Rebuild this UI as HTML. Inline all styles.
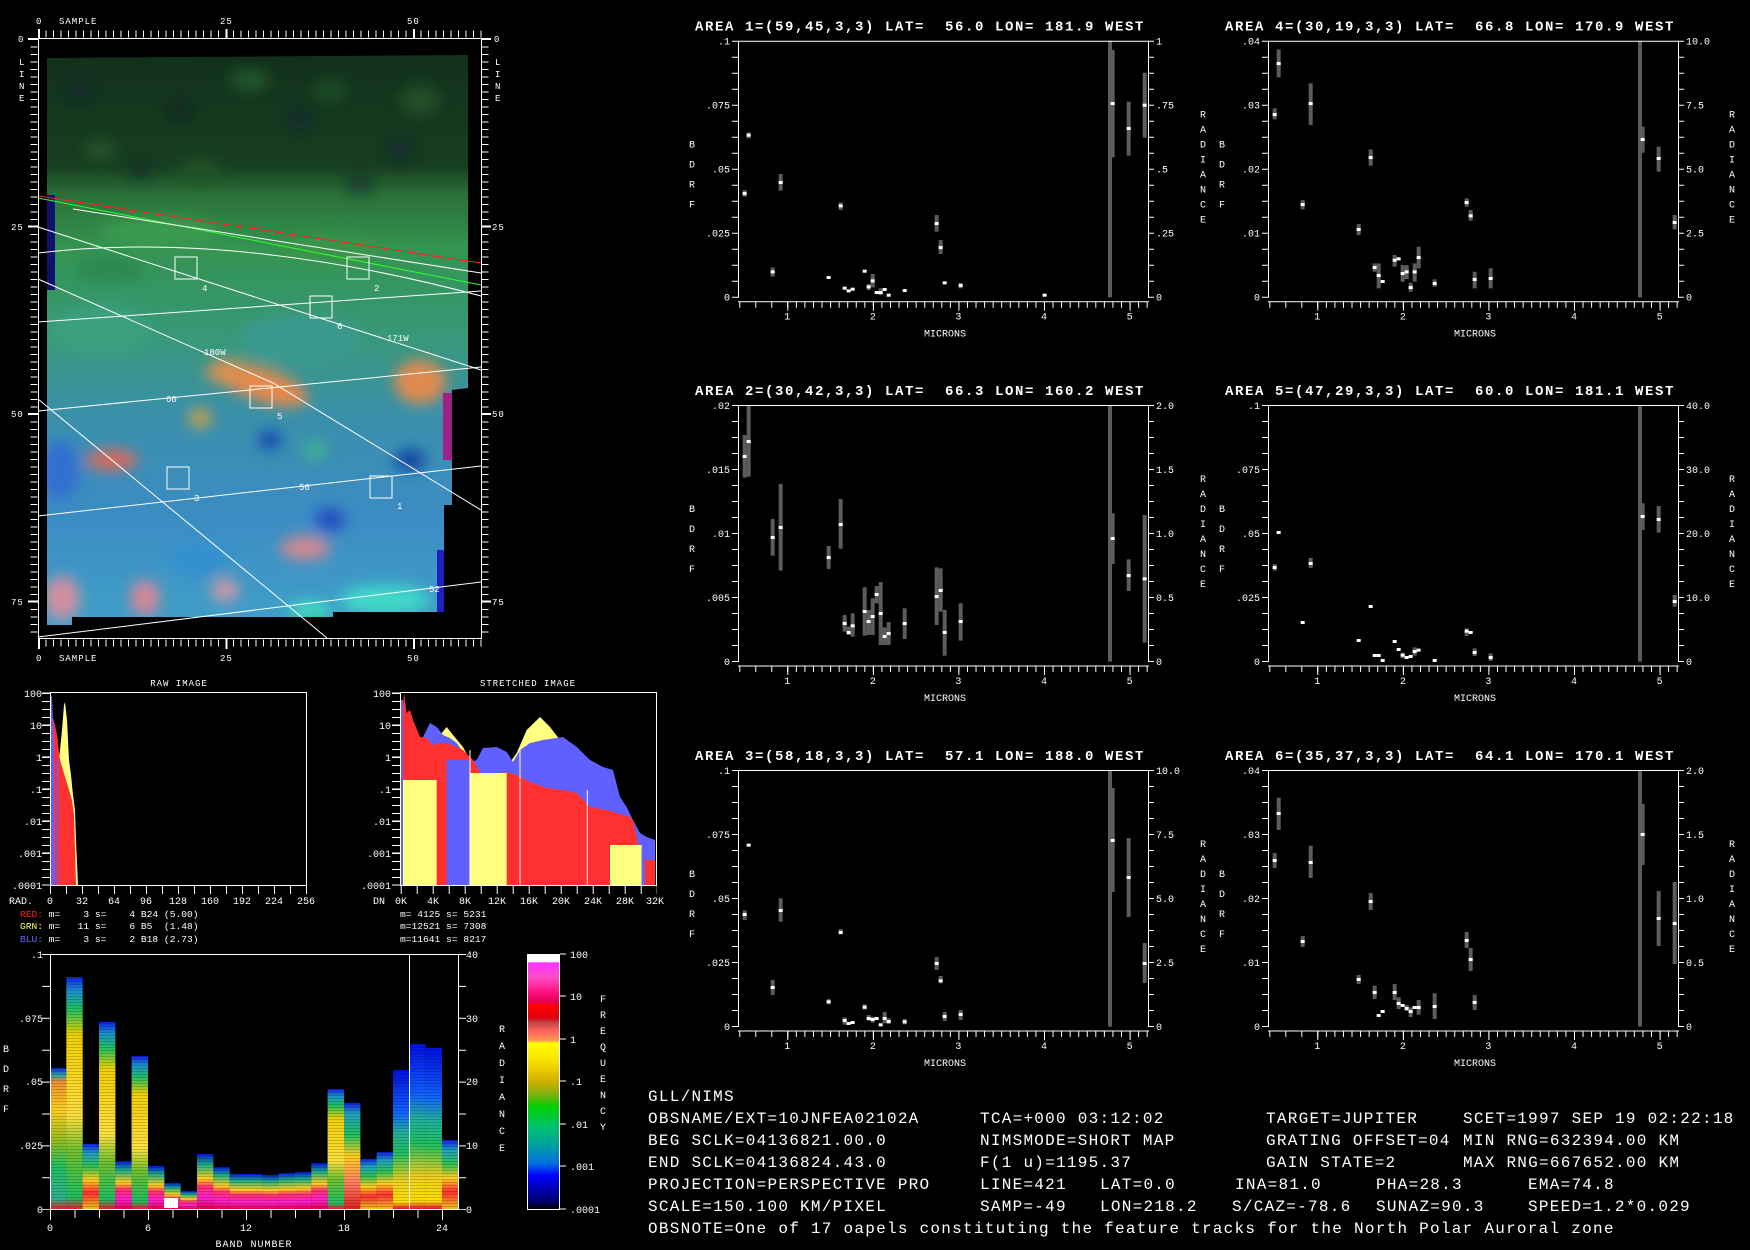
<!DOCTYPE html>
<html><head><meta charset="utf-8"><style>
html,body{margin:0;padding:0;background:#000;}
svg{display:block}
text{font-family:"Liberation Mono",monospace;fill:#fff;white-space:pre}
.s{font-size:10px}
.t{font-size:14px;font-weight:bold;letter-spacing:1.6px}
.b{fill:#5c5c5c}
.p{fill:#fff;width:12px;height:9px}
.ln{stroke:#fff;fill:none}
.bt{font-size:16px;letter-spacing:1.26px}
</style></head><body>
<svg width="1750" height="1250" viewBox="0 0 1750 1250" xmlns="http://www.w3.org/2000/svg">
<defs>
<clipPath id="imgclip"><polygon points="47,58 468,55 468,388 452,390 452,505 444,505 444,612 333,612 333,617 72,617 72,625 47,625"/></clipPath>
<filter id="bl" x="-50%" y="-50%" width="200%" height="200%"><feGaussianBlur stdDeviation="7"/></filter>
<linearGradient id="base" x1="0" y1="0" x2="0" y2="1">
<stop offset="0" stop-color="#12301c"/><stop offset="0.2" stop-color="#173e20"/><stop offset="0.25" stop-color="#2a7038"/><stop offset="0.34" stop-color="#349450"/><stop offset="0.5" stop-color="#38987a"/><stop offset="0.62" stop-color="#3a90a8"/><stop offset="0.8" stop-color="#3c8cc4"/><stop offset="1" stop-color="#40a0c8"/>
</linearGradient>
<linearGradient id="cb" x1="0" y1="0" x2="0" y2="1">
<stop offset="0" stop-color="#fff"/><stop offset="0.03" stop-color="#fff"/><stop offset="0.035" stop-color="#ff30ff"/><stop offset="0.09" stop-color="#ff50c8"/><stop offset="0.15" stop-color="#ff1080"/><stop offset="0.19" stop-color="#e00050"/><stop offset="0.2" stop-color="#ff0000"/><stop offset="0.25" stop-color="#e00010"/><stop offset="0.27" stop-color="#c04848"/><stop offset="0.3" stop-color="#ff6060"/><stop offset="0.34" stop-color="#ff9a50"/><stop offset="0.35" stop-color="#ffff00"/><stop offset="0.42" stop-color="#f8e000"/><stop offset="0.5" stop-color="#d0b000"/><stop offset="0.55" stop-color="#80b010"/><stop offset="0.6" stop-color="#00d000"/><stop offset="0.68" stop-color="#00c070"/><stop offset="0.75" stop-color="#00a0a0"/><stop offset="0.82" stop-color="#0070e0"/><stop offset="0.87" stop-color="#0000ff"/><stop offset="0.97" stop-color="#000070"/><stop offset="1" stop-color="#000"/>
</linearGradient>
<linearGradient id="gA" x1="0" y1="0" x2="0" y2="1"><stop offset="0" stop-color="#1020e0"/><stop offset="0.05" stop-color="#30a0a0"/><stop offset="0.1" stop-color="#f09030"/><stop offset="0.3" stop-color="#ffd020"/><stop offset="0.5" stop-color="#a0c020"/><stop offset="0.7" stop-color="#20c060"/><stop offset="0.93" stop-color="#30b090"/><stop offset="1" stop-color="#e02020"/></linearGradient>
<linearGradient id="gY" x1="0" y1="0" x2="0" y2="1"><stop offset="0" stop-color="#1020e0"/><stop offset="0.06" stop-color="#1890d0"/><stop offset="0.14" stop-color="#20c060"/><stop offset="0.25" stop-color="#f0d000"/><stop offset="0.6" stop-color="#ffe040"/><stop offset="0.75" stop-color="#70c030"/><stop offset="0.95" stop-color="#20c060"/><stop offset="1" stop-color="#e02030"/></linearGradient>
<linearGradient id="gG" x1="0" y1="0" x2="0" y2="1"><stop offset="0" stop-color="#0010e0"/><stop offset="0.3" stop-color="#1060ff"/><stop offset="0.45" stop-color="#20b0a0"/><stop offset="0.6" stop-color="#20c060"/><stop offset="0.8" stop-color="#f0d020"/><stop offset="0.95" stop-color="#ffe000"/><stop offset="1" stop-color="#e01040"/></linearGradient>
<linearGradient id="gL" x1="0" y1="0" x2="0" y2="1"><stop offset="0" stop-color="#0018e0"/><stop offset="0.2" stop-color="#20b080"/><stop offset="0.45" stop-color="#ffd020"/><stop offset="0.6" stop-color="#ff3070"/><stop offset="0.8" stop-color="#ff20d0"/><stop offset="1" stop-color="#e00050"/></linearGradient>
<linearGradient id="gM" x1="0" y1="0" x2="0" y2="1"><stop offset="0" stop-color="#1020e0"/><stop offset="0.15" stop-color="#20a0c0"/><stop offset="0.35" stop-color="#30c050"/><stop offset="0.55" stop-color="#ffd020"/><stop offset="0.75" stop-color="#ff3030"/><stop offset="1" stop-color="#f0c020"/></linearGradient>
<linearGradient id="gO" x1="0" y1="0" x2="0" y2="1"><stop offset="0" stop-color="#1020e0"/><stop offset="0.1" stop-color="#20a0c0"/><stop offset="0.3" stop-color="#20c060"/><stop offset="0.5" stop-color="#ffd020"/><stop offset="0.75" stop-color="#ff8060"/><stop offset="1" stop-color="#e02020"/></linearGradient>
<pattern id="stripe" width="4" height="3" patternUnits="userSpaceOnUse"><rect width="4" height="1" fill="#000" opacity="0.18"/></pattern>
</defs>

<!-- ============ LEFT IMAGE PANEL ============ -->
<g clip-path="url(#imgclip)">
<rect x="40" y="50" width="440" height="580" fill="url(#base)"/>
<g filter="url(#bl)">
<g opacity="0.7">
<ellipse cx="80" cy="90" rx="12" ry="9" fill="#0e2236"/><ellipse cx="180" cy="110" rx="10" ry="8" fill="#0a1a2c"/><ellipse cx="300" cy="120" rx="12" ry="9" fill="#0e2632"/><ellipse cx="400" cy="150" rx="14" ry="9" fill="#0e2238"/><ellipse cx="140" cy="170" rx="10" ry="8" fill="#0b2228"/><ellipse cx="360" cy="185" rx="12" ry="8" fill="#0c2232"/>
</g>
<ellipse cx="250" cy="80" rx="20" ry="10" fill="#245a2c"/><ellipse cx="420" cy="100" rx="20" ry="15" fill="#225028"/><ellipse cx="100" cy="150" rx="15" ry="10" fill="#25552a"/><ellipse cx="200" cy="170" rx="22" ry="10" fill="#215228"/><ellipse cx="330" cy="90" rx="18" ry="10" fill="#1f4d28"/>
<ellipse cx="160" cy="232" rx="60" ry="15" fill="#3a9a50"/><ellipse cx="330" cy="250" rx="50" ry="12" fill="#3a9448"/><ellipse cx="110" cy="270" rx="35" ry="14" fill="#2c8a50"/>
<ellipse cx="100" cy="330" rx="50" ry="25" fill="#3aa080"/><ellipse cx="300" cy="340" rx="60" ry="25" fill="#3a9a90"/>
<ellipse cx="262" cy="385" rx="48" ry="16" fill="#e88848" transform="rotate(18 262 385)"/><ellipse cx="228" cy="372" rx="22" ry="12" fill="#e09050"/><ellipse cx="420" cy="382" rx="26" ry="22" fill="#e08a50"/><ellipse cx="112" cy="460" rx="26" ry="10" fill="#e06858"/><ellipse cx="200" cy="418" rx="12" ry="10" fill="#c0a050"/><ellipse cx="315" cy="450" rx="12" ry="10" fill="#40b090"/><ellipse cx="305" cy="548" rx="25" ry="12" fill="#d08890"/>
<ellipse cx="270" cy="440" rx="12" ry="10" fill="#1850b0"/><ellipse cx="410" cy="460" rx="15" ry="10" fill="#1040a0"/><ellipse cx="330" cy="520" rx="15" ry="12" fill="#2050c0"/><ellipse cx="60" cy="470" rx="20" ry="30" fill="#3070d0"/><ellipse cx="200" cy="560" rx="30" ry="15" fill="#3090d0"/>
<ellipse cx="62" cy="598" rx="18" ry="22" fill="#d090a0"/><ellipse cx="145" cy="598" rx="15" ry="18" fill="#d08898"/><ellipse cx="225" cy="590" rx="14" ry="12" fill="#c898a8"/><ellipse cx="385" cy="600" rx="45" ry="15" fill="#40d8c8"/><ellipse cx="310" cy="610" rx="22" ry="8" fill="#40e0c0"/>
</g>
<rect x="47" y="195" width="8" height="95" fill="#101070"/>
<rect x="443" y="393" width="9" height="67" fill="#a02088"/>
<rect x="437" y="550" width="8" height="62" fill="#2020c0"/>
</g>
<!-- overlay lines -->
<g class="ln" stroke-width="1">
<line x1="38" y1="196" x2="481" y2="263" stroke="#ff2020"/>
<line x1="38" y1="198" x2="481" y2="285" stroke="#30ff30"/>
<line x1="73" y1="209" x2="481" y2="273"/>
<line x1="38" y1="227" x2="481" y2="370"/>
<path d="M38 253 Q233 230 481 296"/>
<polyline points="38,279 273,383 481,510"/>
<line x1="38" y1="322" x2="481" y2="291"/>
<line x1="38" y1="411" x2="481" y2="367"/>
<line x1="38" y1="399" x2="327" y2="638"/>
<line x1="38" y1="516" x2="481" y2="466"/>
<line x1="38" y1="637" x2="481" y2="582"/>
<rect x="175" y="257" width="22" height="22"/><rect x="347" y="257" width="22" height="22"/><rect x="310" y="296" width="22" height="22"/><rect x="250" y="386" width="22" height="22"/><rect x="167" y="467" width="22" height="22"/><rect x="370" y="476" width="22" height="22"/>
</g>
<g class="s" style="font-size:9px">
<text x="202" y="291">4</text><text x="374" y="291">2</text><text x="337" y="329">6</text><text x="277" y="419">5</text><text x="194" y="501">3</text><text x="397" y="509">1</text>
<text x="204" y="355">180W</text><text x="387" y="341">171W</text><text x="166" y="402">60</text><text x="299" y="490">56</text><text x="429" y="592">52</text>
</g>
<!-- frame & rulers -->
<g class="ln">
<rect x="38.5" y="38.5" width="443" height="600"/>
<line x1="38" y1="34" x2="482" y2="34" stroke-width="7" stroke-dasharray="1 6.5"/>
<line x1="38" y1="643" x2="482" y2="643" stroke-width="7" stroke-dasharray="1 6.5"/>
<line x1="34" y1="39" x2="34" y2="639" stroke-width="7" stroke-dasharray="1 6.5"/>
<line x1="485" y1="39" x2="485" y2="639" stroke-width="7" stroke-dasharray="1 6.5"/>
<path d="M39 38V29M226.5 38V29M414 38V29M39 639V649M226.5 639V649M414 639V649M38 39H28M38 226.5H28M38 414H28M38 601.5H28M482 39H491M482 226.5H491M482 414H491M482 601.5H491" stroke-width="2"/>
</g>
<g class="s" style="font-size:9px;letter-spacing:1px">
<text x="36" y="24">0</text><text x="59" y="24">SAMPLE</text><text x="220" y="24">25</text><text x="407" y="24">50</text>
<text x="36" y="661">0</text><text x="59" y="661">SAMPLE</text><text x="220" y="661">25</text><text x="407" y="661">50</text>
<text x="18" y="42">0</text><text x="11" y="230">25</text><text x="11" y="417">50</text><text x="11" y="605">75</text>
<text x="19" y="65">L</text><text x="19" y="77">I</text><text x="19" y="89">N</text><text x="19" y="101">E</text>
<text x="494" y="42">0</text><text x="492" y="230">25</text><text x="492" y="417">50</text><text x="492" y="605">75</text>
<text x="495" y="65">L</text><text x="495" y="77">I</text><text x="495" y="89">N</text><text x="495" y="101">E</text>
</g>

<!-- ============ HISTOGRAMS ============ -->
<text class="s" x="179" y="686" text-anchor="middle" style="font-size:9px;letter-spacing:1px">RAW IMAGE</text>
<text class="s" x="528" y="686" text-anchor="middle" style="font-size:9px;letter-spacing:1px">STRETCHED IMAGE</text>
<!-- raw -->
<polygon fill="#ffff80" points="50,885 50,760 53,740 56,770 59,760 62,730 64,705 65,702 67,720 69,760 71,775 73,795 75,810 76,840 78,885"/>
<polygon fill="#ff3030" points="51,885 51,730 53,718 55,725 57,735 60,760 63,770 66,780 69,790 72,800 74,815 75,850 76,885"/>
<polygon fill="#6060ff" points="50,885 50,693 52,697 53,720 54,750 55,885"/>
<rect x="57" y="760" width="1.5" height="125" fill="#6060ff"/>
<!-- stretched -->
<polygon fill="#ffff80" points="400.7,885 400.7,780 410,780 423,773 430,760 440,735 446.7,727 453,735 463,747 470,760 480,767 496.7,770 506.7,767 516.7,753 526.7,730 540,717 550,727 560,740 570,763 580,780 590,793 596.7,793 606.7,803 616.7,833 630,840 643,840 655,847 655,885"/>
<polygon fill="#6060ff" points="400.7,885 400.7,723 413,763 420,743 430,723 436.7,727 443,735 450,738 456.7,743 470,762 476.7,760 483,748 496.7,747 506.7,752 513,762 520,750 530,743 543,740 556.7,738 563,737 576.7,747 590,760 603,767 613,770 620,797 626.7,807 633,820 640,833 646.7,837 655,840 655,885"/>
<polygon fill="#ff3030" points="400.7,885 400.7,733 404,693 406.7,713 410,710 413,720 420,737 426.7,738 433,745 440,743 446.7,743 456.7,747 463,750 473,760 483,777 496.7,777 506.7,772 516.7,775 530,782 546.7,788 563,790 576.7,793 590,807 606.7,810 616.7,813 630,817 633,820 640,853 646.7,860 650,873 655,885"/>
<rect x="403" y="780" width="33.7" height="105" fill="#ffff80"/>
<rect x="436.7" y="743" width="10" height="142" fill="#ff3030"/>
<rect x="446.7" y="760" width="22.6" height="125" fill="#6060ff"/>
<rect x="470" y="773" width="36.7" height="112" fill="#ffff80"/>
<rect x="610" y="845" width="31.7" height="40" fill="#ffff80"/>
<rect x="641.7" y="850" width="3.3" height="35" fill="#6060ff"/>
<rect x="645" y="860" width="10" height="25" fill="#ff3030"/>
<rect x="401" y="700" width="2" height="185" fill="#6060ff"/>
<g fill="#fff"><rect x="469.5" y="750" width="1" height="135"/><rect x="519.5" y="750" width="1" height="135"/><rect x="586.8" y="790" width="1" height="95"/></g>
<!-- hist frames -->
<g class="ln">
<path d="M50.5 885V692.5H306.5V885"/><path d="M400.5 885V692.5H656.5V885"/>
<path d="M50 885.5H307M400 885.5H657"/>
<line x1="46" y1="693" x2="46" y2="885" stroke-width="8" stroke-dasharray="1 7"/>
<line x1="396" y1="693" x2="396" y2="885" stroke-width="8" stroke-dasharray="1 7"/>
<path d="M42 693H50M42 725H50M42 757H50M42 789H50M42 821H50M42 853H50M42 885H50M392 693H400M392 725H400M392 757H400M392 789H400M392 821H400M392 853H400M392 885H400"/>
<line x1="50" y1="890" x2="307" y2="890" stroke-width="8" stroke-dasharray="1 15"/>
<line x1="400.7" y1="890" x2="657" y2="890" stroke-width="8" stroke-dasharray="1 15"/>
</g>
<g class="s" text-anchor="end">
<text x="42" y="697">100</text><text x="42" y="729">10</text><text x="42" y="761">1</text><text x="42" y="793">.1</text><text x="42" y="825">.01</text><text x="42" y="857">.001</text><text x="42" y="889">.0001</text>
<text x="391" y="697">100</text><text x="391" y="729">10</text><text x="391" y="761">1</text><text x="391" y="793">.1</text><text x="391" y="825">.01</text><text x="391" y="857">.001</text><text x="391" y="889">.0001</text>
</g>
<g class="s" text-anchor="middle">
<text x="21" y="904">RAD.</text><text x="50" y="904">0</text><text x="82" y="904">32</text><text x="114" y="904">64</text><text x="146" y="904">96</text><text x="178" y="904">128</text><text x="210" y="904">160</text><text x="242" y="904">192</text><text x="274" y="904">224</text><text x="306" y="904">256</text>
<text x="379" y="904">DN</text><text x="401" y="904">0K</text><text x="433" y="904">4K</text><text x="465" y="904">8K</text><text x="497" y="904">12K</text><text x="529" y="904">16K</text><text x="561" y="904">20K</text><text x="593" y="904">24K</text><text x="625" y="904">28K</text><text x="655" y="904">32K</text>
</g>
<g class="s" style="font-size:9.6px">
<text x="20" y="917"><tspan style="fill:#ff2020">RED:</tspan> m=    3 s=    4 B24 (5.00)</text>
<text x="20" y="929"><tspan style="fill:#ffff60">GRN:</tspan> m=   11 s=    6 B5  (1.48)</text>
<text x="20" y="942"><tspan style="fill:#6868ff">BLU:</tspan> m=    3 s=    2 B18 (2.73)</text>
<text x="400" y="917">m= 4125 s= 5231</text>
<text x="400" y="929">m=12521 s= 7308</text>
<text x="400" y="942">m=11641 s= 8217</text>
</g>

<!-- ============ BAND PLOT ============ -->
<g>
<rect x="50" y="1068" width="16.4" height="141" fill="url(#gA)"/>
<rect x="66.3" y="977" width="16.4" height="232" fill="url(#gY)"/>
<rect x="82.6" y="1144" width="16.4" height="65" fill="url(#gM)"/>
<rect x="99" y="1022" width="16.4" height="187" fill="url(#gY)"/>
<rect x="115.3" y="1161" width="16.4" height="48" fill="url(#gL)"/>
<rect x="131.6" y="1056" width="16.4" height="153" fill="url(#gY)"/>
<rect x="148" y="1166" width="16.4" height="43" fill="url(#gL)"/>
<rect x="164.3" y="1183" width="16.4" height="26" fill="url(#gL)"/>
<rect x="180.6" y="1191" width="16.4" height="18" fill="url(#gL)"/>
<rect x="197" y="1154" width="16.4" height="55" fill="url(#gL)"/>
<rect x="213.3" y="1167" width="16.4" height="42" fill="url(#gL)"/>
<rect x="229.6" y="1174" width="16.4" height="35" fill="url(#gL)"/>
<rect x="246" y="1174" width="16.4" height="35" fill="url(#gL)"/>
<rect x="262.3" y="1175" width="16.4" height="34" fill="url(#gL)"/>
<rect x="278.6" y="1173" width="16.4" height="36" fill="url(#gL)"/>
<rect x="295" y="1172" width="16.4" height="37" fill="url(#gL)"/>
<rect x="311.3" y="1163" width="16.4" height="46" fill="url(#gL)"/>
<rect x="327.6" y="1089" width="16.4" height="120" fill="url(#gY)"/>
<rect x="344" y="1103" width="16.4" height="106" fill="url(#gO)"/>
<rect x="360.3" y="1159" width="16.4" height="50" fill="url(#gM)"/>
<rect x="376.6" y="1152" width="16.4" height="57" fill="url(#gM)"/>
<rect x="393" y="1070" width="16.4" height="139" fill="url(#gG)"/>
<rect x="409.3" y="1044" width="16.4" height="165" fill="url(#gG)"/>
<rect x="425.6" y="1048" width="16.4" height="161" fill="url(#gG)"/>
<rect x="442" y="1140" width="16" height="69" fill="url(#gM)"/>
<rect x="50" y="970" width="408" height="240" fill="url(#stripe)"/>
<rect x="164" y="1198" width="14" height="10" fill="#fff"/>
</g>
<g class="ln">
<path d="M50.5 1209V954.5H458.5V1209"/>
<line x1="409.5" y1="954" x2="409.5" y2="1209"/>
<path d="M50 1209.5H458"/>
<line x1="46" y1="954" x2="46" y2="1210" stroke-width="8" stroke-dasharray="1 30.9"/>
<line x1="462" y1="954" x2="462" y2="1210" stroke-width="8" stroke-dasharray="1 30.9"/>
<line x1="50" y1="1214" x2="460" y2="1214" stroke-width="8" stroke-dasharray="1 23.5"/>
<path d="M50.5 1209V1220M148.5 1209V1220M246.5 1209V1220M344.5 1209V1220M442.5 1209V1220"/>
</g>
<g class="s" text-anchor="end">
<text x="43" y="958">.1</text><text x="43" y="1022">.075</text><text x="43" y="1085">.05</text><text x="43" y="1149">.025</text><text x="43" y="1213">0</text>
</g>
<g class="s">
<text x="466" y="958">40</text><text x="466" y="1022">30</text><text x="466" y="1085">20</text><text x="466" y="1149">10</text><text x="466" y="1213">0</text>
</g>
<g class="s" text-anchor="middle">
<text x="50" y="1231">0</text><text x="148" y="1231">6</text><text x="246" y="1231">12</text><text x="344" y="1231">18</text><text x="442" y="1231">24</text>
<text x="254" y="1247" style="letter-spacing:1px">BAND NUMBER</text>
<text x="6" y="1052">B</text><text x="6" y="1072">D</text><text x="6" y="1092">R</text><text x="6" y="1112">F</text>
<text x="502" y="1032">R</text><text x="502" y="1049">A</text><text x="502" y="1066">D</text><text x="502" y="1083">I</text><text x="502" y="1100">A</text><text x="502" y="1117">N</text><text x="502" y="1134">C</text><text x="502" y="1151">E</text>
<text x="603" y="1002">F</text><text x="603" y="1018">R</text><text x="603" y="1034">E</text><text x="603" y="1050">Q</text><text x="603" y="1066">U</text><text x="603" y="1082">E</text><text x="603" y="1098">N</text><text x="603" y="1114">C</text><text x="603" y="1130">Y</text>
</g>
<!-- colorbar -->
<rect x="527" y="954" width="32" height="255" fill="url(#cb)"/>
<rect x="527.5" y="954.5" width="32" height="255" fill="none" stroke="#fff"/>
<path class="ln" d="M560 954H566M560 996H566M560 1039H566M560 1081H566M560 1124H566M560 1166H566M560 1209H566"/>
<g class="s">
<text x="570" y="958">100</text><text x="570" y="1000">10</text><text x="570" y="1043">1</text><text x="570" y="1085">.1</text><text x="570" y="1128">.01</text><text x="570" y="1170">.001</text><text x="570" y="1213">.0001</text>
</g>

<!-- ============ SPECTRAL PLOTS ============ -->
<!-- Plot 1 -->
<g transform="translate(738,40.7)">
<text class="t" x="-43" y="-10">AREA 1=(59,45,3,3) LAT=  56.0 LON= 181.9 WEST</text>
<g transform="translate(-8,-5) scale(0.33333)">
<rect class="b" x="38" y="463" width="12" height="20"/><rect class="p" x="38" y="469"/>
<rect class="b" x="50" y="290" width="12" height="18"/><rect class="p" x="50" y="294"/>
<rect class="b" x="122" y="695" width="12" height="28"/><rect class="p" x="122" y="704"/>
<rect class="b" x="146" y="415" width="12" height="50"/><rect class="p" x="146" y="436"/>
<rect class="p" x="290" y="721"/>
<rect class="b" x="326" y="500" width="12" height="23"/><rect class="p" x="326" y="506"/>
<rect class="p" x="338" y="753"/><rect class="p" x="350" y="761"/><rect class="p" x="362" y="756"/><rect class="p" x="398" y="702"/>
<rect class="b" x="410" y="745" width="12" height="18"/><rect class="p" x="410" y="749"/>
<rect class="b" x="422" y="715" width="12" height="40"/><rect class="p" x="422" y="731"/>
<rect class="p" x="434" y="766"/><rect class="b" x="446" y="758" width="12" height="20"/><rect class="p" x="446" y="766"/><rect class="p" x="458" y="757"/><rect class="p" x="470" y="774"/><rect class="p" x="518" y="760"/>
<rect class="b" x="614" y="538" width="12" height="50"/><rect class="p" x="614" y="559"/>
<rect class="b" x="626" y="613" width="12" height="42"/><rect class="p" x="626" y="631"/>
<rect class="p" x="638" y="737"/>
<rect class="b" x="686" y="741" width="12" height="17"/><rect class="p" x="686" y="745"/>
<rect class="p" x="938" y="774"/>
<rect class="b" x="1134" y="15" width="12" height="770"/>
<rect class="b" x="1142" y="43" width="12" height="322"/><rect class="p" x="1142" y="199"/>
<rect class="b" x="1190" y="198" width="12" height="162"/><rect class="p" x="1190" y="274"/>
<rect class="b" x="1238" y="111" width="12" height="195"/><rect class="p" x="1238" y="204"/>
</g>
<g class="ln"><path d="M0.5 257V0.5H410.5V257"/><path d="M0 261H411"/>
<line x1="-3" y1="0" x2="-3" y2="258" stroke-width="6" stroke-dasharray="1 15"/><line x1="413" y1="0" x2="413" y2="258" stroke-width="6" stroke-dasharray="1 15"/>
<line x1="1.3" y1="264" x2="50" y2="264" stroke-width="6" stroke-dasharray="1 15"/><line x1="49.3" y1="264" x2="411" y2="264" stroke-width="6" stroke-dasharray="1 7.556"/>
<path d="M49.8 261V270M135.4 261V270M220.9 261V270M306.5 261V270M392.1 261V270"/></g>
<g class="s" text-anchor="end"><text x="-8" y="4">.1</text><text x="-8" y="68">.075</text><text x="-8" y="132">.05</text><text x="-8" y="196">.025</text><text x="-8" y="260">0</text></g>
<g class="s"><text x="418" y="4">1</text><text x="418" y="68">.75</text><text x="418" y="132">.5</text><text x="418" y="196">.25</text><text x="418" y="260">0</text></g>
<g class="s" text-anchor="middle"><text x="49.3" y="279">1</text><text x="134.9" y="279">2</text><text x="220.4" y="279">3</text><text x="306" y="279">4</text><text x="391.6" y="279">5</text><text x="207" y="296">MICRONS</text>
<text x="-46" y="107">B</text><text x="-46" y="127">D</text><text x="-46" y="147">R</text><text x="-46" y="167">F</text>
<text x="465" y="77">R</text><text x="465" y="92">A</text><text x="465" y="107">D</text><text x="465" y="122">I</text><text x="465" y="137">A</text><text x="465" y="152">N</text><text x="465" y="167">C</text><text x="465" y="182">E</text></g>
</g>

<!-- Plot 4 -->
<g transform="translate(1268,40.7)">
<text class="t" x="-43" y="-10">AREA 4=(30,19,3,3) LAT=  66.8 LON= 170.9 WEST</text>
<g transform="translate(-8,-5) scale(0.33333)">
<rect class="b" x="38" y="218" width="12" height="33"/><rect class="p" x="38" y="232"/>
<rect class="b" x="50" y="41" width="12" height="84"/><rect class="p" x="50" y="79"/>
<rect class="b" x="122" y="493" width="12" height="28"/><rect class="p" x="122" y="502"/>
<rect class="b" x="146" y="143" width="12" height="125"/><rect class="p" x="146" y="199"/>
<rect class="b" x="290" y="565" width="12" height="33"/><rect class="p" x="290" y="577"/>
<rect class="b" x="326" y="341" width="12" height="49"/><rect class="p" x="326" y="361"/>
<rect class="b" x="338" y="683" width="12" height="25"/><rect class="p" x="338" y="691"/>
<rect class="b" x="350" y="683" width="12" height="75"/><rect class="p" x="350" y="715"/>
<rect class="p" x="362" y="733"/>
<rect class="b" x="398" y="658" width="12" height="35"/><rect class="p" x="398" y="669"/>
<rect class="p" x="410" y="665"/>
<rect class="b" x="422" y="688" width="12" height="50"/><rect class="p" x="422" y="709"/>
<rect class="b" x="434" y="688" width="12" height="42"/><rect class="p" x="434" y="704"/>
<rect class="b" x="446" y="741" width="12" height="27"/><rect class="p" x="446" y="751"/>
<rect class="b" x="458" y="683" width="12" height="55"/><rect class="p" x="458" y="704"/>
<rect class="b" x="470" y="633" width="12" height="65"/><rect class="p" x="470" y="661"/>
<rect class="b" x="518" y="731" width="12" height="22"/><rect class="p" x="518" y="739"/>
<rect class="b" x="614" y="488" width="12" height="25"/><rect class="p" x="614" y="496"/>
<rect class="b" x="626" y="523" width="12" height="32"/><rect class="p" x="626" y="536"/>
<rect class="b" x="638" y="708" width="12" height="50"/><rect class="p" x="638" y="727"/>
<rect class="b" x="686" y="698" width="12" height="60"/><rect class="p" x="686" y="724"/>
<rect class="b" x="1134" y="15" width="12" height="770"/>
<rect class="b" x="1142" y="273" width="12" height="78"/><rect class="p" x="1142" y="307"/>
<rect class="b" x="1190" y="333" width="12" height="75"/><rect class="p" x="1190" y="364"/>
<rect class="b" x="1238" y="538" width="12" height="43"/><rect class="p" x="1238" y="556"/>
</g>
<g class="ln"><path d="M0.5 257V0.5H410.5V257"/><path d="M0 261H411"/>
<line x1="-3" y1="0" x2="-3" y2="258" stroke-width="6" stroke-dasharray="1 15"/><line x1="413" y1="0" x2="413" y2="258" stroke-width="6" stroke-dasharray="1 15"/>
<line x1="1.3" y1="264" x2="50" y2="264" stroke-width="6" stroke-dasharray="1 15"/><line x1="49.3" y1="264" x2="411" y2="264" stroke-width="6" stroke-dasharray="1 7.556"/>
<path d="M49.8 261V270M135.4 261V270M220.9 261V270M306.5 261V270M392.1 261V270"/></g>
<g class="s" text-anchor="end"><text x="-8" y="4">.04</text><text x="-8" y="68">.03</text><text x="-8" y="132">.02</text><text x="-8" y="196">.01</text><text x="-8" y="260">0</text></g>
<g class="s"><text x="418" y="4">10.0</text><text x="418" y="68">7.5</text><text x="418" y="132">5.0</text><text x="418" y="196">2.5</text><text x="418" y="260">0</text></g>
<g class="s" text-anchor="middle"><text x="49.3" y="279">1</text><text x="134.9" y="279">2</text><text x="220.4" y="279">3</text><text x="306" y="279">4</text><text x="391.6" y="279">5</text><text x="207" y="296">MICRONS</text>
<text x="-46" y="107">B</text><text x="-46" y="127">D</text><text x="-46" y="147">R</text><text x="-46" y="167">F</text>
<text x="464" y="77">R</text><text x="464" y="92">A</text><text x="464" y="107">D</text><text x="464" y="122">I</text><text x="464" y="137">A</text><text x="464" y="152">N</text><text x="464" y="167">C</text><text x="464" y="182">E</text></g>
</g>

<!-- Plot 2 -->
<g transform="translate(738,405)">
<text class="t" x="-43" y="-10">AREA 2=(30,42,3,3) LAT=  66.3 LON= 160.2 WEST</text>
<g transform="translate(-8,-5) scale(0.33333)">
<rect class="b" x="38" y="105" width="12" height="128"/><rect class="p" x="38" y="165"/>
<rect class="b" x="50" y="15" width="12" height="215"/><rect class="p" x="50" y="120"/>
<rect class="b" x="122" y="357" width="12" height="110"/><rect class="p" x="122" y="408"/>
<rect class="b" x="146" y="252" width="12" height="260"/><rect class="p" x="146" y="378"/>
<rect class="b" x="290" y="438" width="12" height="69"/><rect class="p" x="290" y="468"/>
<rect class="b" x="326" y="297" width="12" height="149"/><rect class="p" x="326" y="369"/>
<rect class="b" x="338" y="645" width="12" height="50"/><rect class="p" x="338" y="666"/>
<rect class="b" x="350" y="680" width="12" height="25"/><rect class="p" x="350" y="693"/>
<rect class="b" x="362" y="640" width="12" height="70"/><rect class="p" x="362" y="673"/>
<rect class="b" x="398" y="562" width="12" height="145"/><rect class="p" x="398" y="630"/>
<rect class="b" x="410" y="630" width="12" height="75"/><rect class="p" x="410" y="660"/>
<rect class="b" x="422" y="595" width="12" height="110"/><rect class="p" x="422" y="645"/>
<rect class="b" x="434" y="558" width="12" height="52"/><rect class="p" x="434" y="579"/>
<rect class="b" x="446" y="546" width="12" height="189"/><rect class="p" x="446" y="636"/>
<rect class="b" x="458" y="682" width="12" height="53"/><rect class="p" x="458" y="705"/>
<rect class="b" x="470" y="666" width="12" height="69"/><rect class="p" x="470" y="696"/>
<rect class="b" x="518" y="625" width="12" height="92"/><rect class="p" x="518" y="666"/>
<rect class="b" x="614" y="502" width="12" height="173"/><rect class="p" x="614" y="585"/>
<rect class="b" x="626" y="505" width="12" height="130"/><rect class="p" x="626" y="567"/>
<rect class="b" x="638" y="630" width="12" height="137"/><rect class="p" x="638" y="693"/>
<rect class="b" x="686" y="610" width="12" height="112"/><rect class="p" x="686" y="660"/>
<rect class="b" x="1134" y="15" width="12" height="770"/>
<rect class="b" x="1142" y="340" width="12" height="152"/><rect class="p" x="1142" y="411"/>
<rect class="b" x="1190" y="478" width="12" height="95"/><rect class="p" x="1190" y="522"/>
<rect class="b" x="1238" y="345" width="12" height="383"/><rect class="p" x="1238" y="532"/>
</g>
<g class="ln"><path d="M0.5 257V0.5H410.5V257"/><path d="M0 261H411"/>
<line x1="-3" y1="0" x2="-3" y2="258" stroke-width="6" stroke-dasharray="1 15"/><line x1="413" y1="0" x2="413" y2="258" stroke-width="6" stroke-dasharray="1 15"/>
<line x1="1.3" y1="264" x2="50" y2="264" stroke-width="6" stroke-dasharray="1 15"/><line x1="49.3" y1="264" x2="411" y2="264" stroke-width="6" stroke-dasharray="1 7.556"/>
<path d="M49.8 261V270M135.4 261V270M220.9 261V270M306.5 261V270M392.1 261V270"/></g>
<g class="s" text-anchor="end"><text x="-8" y="4">.02</text><text x="-8" y="68">.015</text><text x="-8" y="132">.01</text><text x="-8" y="196">.005</text><text x="-8" y="260">0</text></g>
<g class="s"><text x="418" y="4">2.0</text><text x="418" y="68">1.5</text><text x="418" y="132">1.0</text><text x="418" y="196">0.5</text><text x="418" y="260">0</text></g>
<g class="s" text-anchor="middle"><text x="49.3" y="279">1</text><text x="134.9" y="279">2</text><text x="220.4" y="279">3</text><text x="306" y="279">4</text><text x="391.6" y="279">5</text><text x="207" y="296">MICRONS</text>
<text x="-46" y="107">B</text><text x="-46" y="127">D</text><text x="-46" y="147">R</text><text x="-46" y="167">F</text>
<text x="465" y="77">R</text><text x="465" y="92">A</text><text x="465" y="107">D</text><text x="465" y="122">I</text><text x="465" y="137">A</text><text x="465" y="152">N</text><text x="465" y="167">C</text><text x="465" y="182">E</text></g>
</g>

<!-- Plot 5 -->
<g transform="translate(1268,405)">
<text class="t" x="-43" y="-10">AREA 5=(47,29,3,3) LAT=  60.0 LON= 181.1 WEST</text>
<g transform="translate(-8,-5) scale(0.33333)">
<rect class="b" x="38" y="492" width="12" height="20"/><rect class="p" x="38" y="498"/>
<rect class="p" x="50" y="393"/><rect class="p" x="122" y="663"/>
<rect class="b" x="146" y="474" width="12" height="30"/><rect class="p" x="146" y="486"/>
<rect class="p" x="290" y="717"/><rect class="p" x="326" y="615"/><rect class="p" x="338" y="762"/><rect class="p" x="350" y="762"/><rect class="p" x="362" y="777"/><rect class="p" x="398" y="720"/><rect class="p" x="410" y="744"/>
<rect class="b" x="422" y="758" width="12" height="17"/><rect class="p" x="422" y="761"/>
<rect class="p" x="434" y="768"/><rect class="p" x="446" y="765"/>
<rect class="b" x="458" y="742" width="12" height="25"/><rect class="p" x="458" y="750"/>
<rect class="p" x="470" y="746"/><rect class="p" x="518" y="777"/>
<rect class="b" x="614" y="685" width="12" height="23"/><rect class="p" x="614" y="689"/>
<rect class="p" x="626" y="693"/>
<rect class="b" x="638" y="745" width="12" height="23"/><rect class="p" x="638" y="753"/>
<rect class="b" x="686" y="760" width="12" height="23"/><rect class="p" x="686" y="768"/>
<rect class="b" x="1134" y="15" width="12" height="770"/>
<rect class="b" x="1142" y="310" width="12" height="80"/><rect class="p" x="1142" y="345"/>
<rect class="b" x="1190" y="318" width="12" height="80"/><rect class="p" x="1190" y="354"/>
<rect class="b" x="1238" y="585" width="12" height="35"/><rect class="p" x="1238" y="600"/>
</g>
<g class="ln"><path d="M0.5 257V0.5H410.5V257"/><path d="M0 261H411"/>
<line x1="-3" y1="0" x2="-3" y2="258" stroke-width="6" stroke-dasharray="1 15"/><line x1="413" y1="0" x2="413" y2="258" stroke-width="6" stroke-dasharray="1 15"/>
<line x1="1.3" y1="264" x2="50" y2="264" stroke-width="6" stroke-dasharray="1 15"/><line x1="49.3" y1="264" x2="411" y2="264" stroke-width="6" stroke-dasharray="1 7.556"/>
<path d="M49.8 261V270M135.4 261V270M220.9 261V270M306.5 261V270M392.1 261V270"/></g>
<g class="s" text-anchor="end"><text x="-8" y="4">.1</text><text x="-8" y="68">.075</text><text x="-8" y="132">.05</text><text x="-8" y="196">.025</text><text x="-8" y="260">0</text></g>
<g class="s"><text x="418" y="4">40.0</text><text x="418" y="68">30.0</text><text x="418" y="132">20.0</text><text x="418" y="196">10.0</text><text x="418" y="260">0</text></g>
<g class="s" text-anchor="middle"><text x="49.3" y="279">1</text><text x="134.9" y="279">2</text><text x="220.4" y="279">3</text><text x="306" y="279">4</text><text x="391.6" y="279">5</text><text x="207" y="296">MICRONS</text>
<text x="-46" y="107">B</text><text x="-46" y="127">D</text><text x="-46" y="147">R</text><text x="-46" y="167">F</text>
<text x="464" y="77">R</text><text x="464" y="92">A</text><text x="464" y="107">D</text><text x="464" y="122">I</text><text x="464" y="137">A</text><text x="464" y="152">N</text><text x="464" y="167">C</text><text x="464" y="182">E</text></g>
</g>

<!-- Plot 3 -->
<g transform="translate(738,770)">
<text class="t" x="-43" y="-10">AREA 3=(58,18,3,3) LAT=  57.1 LON= 188.0 WEST</text>
<g transform="translate(-8,-5) scale(0.33333)">
<rect class="b" x="38" y="436" width="12" height="29"/><rect class="p" x="38" y="444"/>
<rect class="p" x="50" y="236"/>
<rect class="b" x="122" y="645" width="12" height="45"/><rect class="p" x="122" y="663"/>
<rect class="b" x="146" y="400" width="12" height="70"/><rect class="p" x="146" y="432"/>
<rect class="b" x="290" y="702" width="12" height="16"/><rect class="p" x="290" y="706"/>
<rect class="b" x="326" y="492" width="12" height="16"/><rect class="p" x="326" y="498"/>
<rect class="b" x="338" y="757" width="12" height="22"/><rect class="p" x="338" y="762"/>
<rect class="p" x="350" y="771"/><rect class="p" x="362" y="768"/>
<rect class="b" x="398" y="718" width="12" height="16"/><rect class="p" x="398" y="722"/>
<rect class="b" x="410" y="750" width="12" height="17"/><rect class="p" x="410" y="756"/>
<rect class="b" x="422" y="755" width="12" height="18"/><rect class="p" x="422" y="759"/>
<rect class="p" x="434" y="756"/><rect class="p" x="446" y="775"/>
<rect class="b" x="458" y="741" width="12" height="34"/><rect class="p" x="458" y="756"/>
<rect class="b" x="470" y="760" width="12" height="17"/><rect class="p" x="470" y="765"/>
<rect class="b" x="518" y="762" width="12" height="16"/><rect class="p" x="518" y="766"/>
<rect class="b" x="614" y="576" width="12" height="39"/><rect class="p" x="614" y="591"/>
<rect class="b" x="626" y="633" width="12" height="22"/><rect class="p" x="626" y="643"/>
<rect class="b" x="638" y="741" width="12" height="27"/><rect class="p" x="638" y="750"/>
<rect class="b" x="686" y="735" width="12" height="30"/><rect class="p" x="686" y="744"/>
<rect class="b" x="1134" y="15" width="12" height="770"/>
<rect class="b" x="1142" y="69" width="12" height="312"/><rect class="p" x="1142" y="222"/>
<rect class="b" x="1190" y="219" width="12" height="237"/><rect class="p" x="1190" y="333"/>
<rect class="b" x="1238" y="534" width="12" height="120"/><rect class="p" x="1238" y="591"/>
</g>
<g class="ln"><path d="M0.5 257V0.5H410.5V257"/><path d="M0 261H411"/>
<line x1="-3" y1="0" x2="-3" y2="258" stroke-width="6" stroke-dasharray="1 15"/><line x1="413" y1="0" x2="413" y2="258" stroke-width="6" stroke-dasharray="1 15"/>
<line x1="1.3" y1="264" x2="50" y2="264" stroke-width="6" stroke-dasharray="1 15"/><line x1="49.3" y1="264" x2="411" y2="264" stroke-width="6" stroke-dasharray="1 7.556"/>
<path d="M49.8 261V270M135.4 261V270M220.9 261V270M306.5 261V270M392.1 261V270"/></g>
<g class="s" text-anchor="end"><text x="-8" y="4">.1</text><text x="-8" y="68">.075</text><text x="-8" y="132">.05</text><text x="-8" y="196">.025</text><text x="-8" y="260">0</text></g>
<g class="s"><text x="418" y="4">10.0</text><text x="418" y="68">7.5</text><text x="418" y="132">5.0</text><text x="418" y="196">2.5</text><text x="418" y="260">0</text></g>
<g class="s" text-anchor="middle"><text x="49.3" y="279">1</text><text x="134.9" y="279">2</text><text x="220.4" y="279">3</text><text x="306" y="279">4</text><text x="391.6" y="279">5</text><text x="207" y="296">MICRONS</text>
<text x="-46" y="107">B</text><text x="-46" y="127">D</text><text x="-46" y="147">R</text><text x="-46" y="167">F</text>
<text x="465" y="77">R</text><text x="465" y="92">A</text><text x="465" y="107">D</text><text x="465" y="122">I</text><text x="465" y="137">A</text><text x="465" y="152">N</text><text x="465" y="167">C</text><text x="465" y="182">E</text></g>
</g>

<!-- Plot 6 -->
<g transform="translate(1268,770)">
<text class="t" x="-43" y="-10">AREA 6=(35,37,3,3) LAT=  64.1 LON= 170.1 WEST</text>
<g transform="translate(-8,-5) scale(0.33333)">
<rect class="b" x="38" y="264" width="12" height="45"/><rect class="p" x="38" y="282"/>
<rect class="b" x="50" y="98" width="12" height="97"/><rect class="p" x="50" y="141"/>
<rect class="b" x="122" y="513" width="12" height="33"/><rect class="p" x="122" y="525"/>
<rect class="b" x="146" y="242" width="12" height="97"/><rect class="p" x="146" y="288"/>
<rect class="b" x="290" y="630" width="12" height="27"/><rect class="p" x="290" y="639"/>
<rect class="b" x="326" y="384" width="12" height="51"/><rect class="p" x="326" y="405"/>
<rect class="b" x="338" y="662" width="12" height="40"/><rect class="p" x="338" y="678"/>
<rect class="p" x="350" y="747"/><rect class="p" x="362" y="735"/>
<rect class="b" x="398" y="657" width="12" height="48"/><rect class="p" x="398" y="678"/>
<rect class="b" x="410" y="697" width="12" height="35"/><rect class="p" x="410" y="711"/>
<rect class="p" x="422" y="717"/>
<rect class="b" x="434" y="720" width="12" height="18"/><rect class="p" x="434" y="726"/>
<rect class="b" x="446" y="727" width="12" height="29"/><rect class="p" x="446" y="735"/>
<rect class="p" x="458" y="723"/>
<rect class="b" x="470" y="705" width="12" height="44"/><rect class="p" x="470" y="723"/>
<rect class="b" x="518" y="685" width="12" height="77"/><rect class="p" x="518" y="720"/>
<rect class="b" x="614" y="501" width="12" height="48"/><rect class="p" x="614" y="522"/>
<rect class="b" x="626" y="549" width="12" height="69"/><rect class="p" x="626" y="579"/>
<rect class="b" x="638" y="690" width="12" height="45"/><rect class="p" x="638" y="708"/>
<rect class="b" x="1134" y="15" width="12" height="770"/>
<rect class="b" x="1142" y="117" width="12" height="183"/><rect class="p" x="1142" y="204"/>
<rect class="b" x="1190" y="378" width="12" height="165"/><rect class="p" x="1190" y="456"/>
<rect class="b" x="1238" y="351" width="12" height="246"/><rect class="p" x="1238" y="471"/>
</g>
<g class="ln"><path d="M0.5 257V0.5H410.5V257"/><path d="M0 261H411"/>
<line x1="-3" y1="0" x2="-3" y2="258" stroke-width="6" stroke-dasharray="1 15"/><line x1="413" y1="0" x2="413" y2="258" stroke-width="6" stroke-dasharray="1 15"/>
<line x1="1.3" y1="264" x2="50" y2="264" stroke-width="6" stroke-dasharray="1 15"/><line x1="49.3" y1="264" x2="411" y2="264" stroke-width="6" stroke-dasharray="1 7.556"/>
<path d="M49.8 261V270M135.4 261V270M220.9 261V270M306.5 261V270M392.1 261V270"/></g>
<g class="s" text-anchor="end"><text x="-8" y="4">.04</text><text x="-8" y="68">.03</text><text x="-8" y="132">.02</text><text x="-8" y="196">.01</text><text x="-8" y="260">0</text></g>
<g class="s"><text x="418" y="4">2.0</text><text x="418" y="68">1.5</text><text x="418" y="132">1.0</text><text x="418" y="196">0.5</text><text x="418" y="260">0</text></g>
<g class="s" text-anchor="middle"><text x="49.3" y="279">1</text><text x="134.9" y="279">2</text><text x="220.4" y="279">3</text><text x="306" y="279">4</text><text x="391.6" y="279">5</text><text x="207" y="296">MICRONS</text>
<text x="-46" y="107">B</text><text x="-46" y="127">D</text><text x="-46" y="147">R</text><text x="-46" y="167">F</text>
<text x="464" y="77">R</text><text x="464" y="92">A</text><text x="464" y="107">D</text><text x="464" y="122">I</text><text x="464" y="137">A</text><text x="464" y="152">N</text><text x="464" y="167">C</text><text x="464" y="182">E</text></g>
</g>

<!-- ============ BOTTOM TEXT ============ -->
<g class="bt">
<text x="648" y="1101">GLL/NIMS</text>
<text x="648" y="1123">OBSNAME/EXT=10JNFEA02102A</text><text x="980" y="1123">TCA=+000 03:12:02</text><text x="1266" y="1123">TARGET=JUPITER</text><text x="1463" y="1123">SCET=1997 SEP 19 02:22:18</text>
<text x="648" y="1145">BEG SCLK=04136821.00.0</text><text x="980" y="1145">NIMSMODE=SHORT MAP</text><text x="1266" y="1145">GRATING OFFSET=04</text><text x="1463" y="1145">MIN RNG=632394.00 KM</text>
<text x="648" y="1167">END SCLK=04136824.43.0</text><text x="980" y="1167">F(1 u)=1195.37</text><text x="1266" y="1167">GAIN STATE=2</text><text x="1463" y="1167">MAX RNG=667652.00 KM</text>
<text x="648" y="1189">PROJECTION=PERSPECTIVE PRO</text><text x="980" y="1189">LINE=421</text><text x="1100" y="1189">LAT=0.0</text><text x="1235" y="1189">INA=81.0</text><text x="1376" y="1189">PHA=28.3</text><text x="1528" y="1189">EMA=74.8</text>
<text x="648" y="1211">SCALE=150.100 KM/PIXEL</text><text x="980" y="1211">SAMP=-49</text><text x="1100" y="1211">LON=218.2</text><text x="1232" y="1211">S/CAZ=-78.6</text><text x="1376" y="1211">SUNAZ=90.3</text><text x="1528" y="1211">SPEED=1.2*0.029</text>
<text x="648" y="1233">OBSNOTE=One of 17 oapels constituting the feature tracks for the North Polar Auroral zone</text>
</g>
</svg>
</body></html>
